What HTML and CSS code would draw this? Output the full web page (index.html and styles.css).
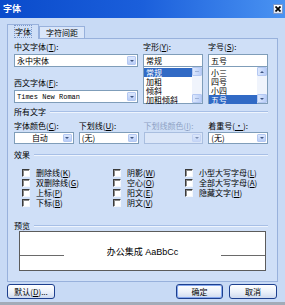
FILE: index.html
```html
<!DOCTYPE html>
<html lang="zh">
<head>
    <meta charset="UTF-8">
    <title>字体</title>
    <link rel="stylesheet" href="styles.css">
</head>
<body>
    <div class="window">
        <div class="titlebar">
            <span class="title">字体</span>
            <span class="close">
                <svg width="6" height="6" viewBox="0 0 6 6"><path d="M0.5 0.5L5.5 5.5M5.5 0.5L0.5 5.5" stroke="#000" stroke-width="1.7"/></svg>
            </span>
        </div>

        <div class="tabs">
            <div class="tab active"><span class="focus">字体</span></div>
            <div class="tab">字符间距</div>
        </div>

        <div class="panel">
            <div class="fonts">
                <div class="font-main">
                    <div class="label">中文字体(<u>T</u>):</div>
                    <div class="combo"><span class="value">永中宋体</span><span class="arrow"></span></div>
                    <div class="label second">西文字体(<u>F</u>):</div>
                    <div class="combo"><span class="value mono">Times New Roman</span><span class="arrow"></span></div>
                </div>
                <div class="font-list">
                    <div class="label">字形(<u>Y</u>):</div>
                    <div class="field">常规</div>
                    <div class="list">
                        <div class="items">
                            <div class="item selected">常规</div>
                            <div class="item">加粗</div>
                            <div class="item">倾斜</div>
                            <div class="item">加粗倾斜</div>
                        </div>
                        <div class="scroll faded">
                            <span class="sbtn up"></span>
                            <span class="track"></span>
                            <span class="sbtn down"></span>
                        </div>
                    </div>
                </div>
                <div class="font-list">
                    <div class="label">字号(<u>S</u>):</div>
                    <div class="field">五号</div>
                    <div class="list">
                        <div class="items">
                            <div class="item">小三</div>
                            <div class="item">四号</div>
                            <div class="item">小四</div>
                            <div class="item selected">五号</div>
                        </div>
                        <div class="scroll">
                            <span class="sbtn up"></span>
                            <span class="track"></span>
                            <span class="sbtn down"></span>
                        </div>
                    </div>
                </div>
            </div>

            <div class="group">所有文字</div>
            <div class="row4">
                <div>
                    <div class="label">字体颜色(<u>C</u>):</div>
                    <div class="combo small"><span class="value center">自动</span><span class="arrow"></span></div>
                </div>
                <div>
                    <div class="label">下划线(<u>U</u>):</div>
                    <div class="combo small"><span class="value">(无)</span><span class="arrow"></span></div>
                </div>
                <div>
                    <div class="label disabled">下划线颜色(<u>I</u>):</div>
                    <div class="combo small off"><span class="value"></span><span class="arrow"></span></div>
                </div>
                <div>
                    <div class="label">着重号(<u>·</u>):</div>
                    <div class="combo small"><span class="value">(无)</span><span class="arrow"></span></div>
                </div>
            </div>

            <div class="group effects-title">效果</div>
            <div class="effects">
                <div class="check"><span class="box"></span>删除线(<u>K</u>)</div>
                <div class="check"><span class="box"></span>双删除线(<u>G</u>)</div>
                <div class="check"><span class="box"></span>上标(<u>P</u>)</div>
                <div class="check"><span class="box"></span>下标(<u>B</u>)</div>
                <div class="check"><span class="box"></span>阴影(<u>W</u>)</div>
                <div class="check"><span class="box"></span>空心(<u>O</u>)</div>
                <div class="check"><span class="box"></span>阳文(<u>E</u>)</div>
                <div class="check"><span class="box"></span>阴文(<u>V</u>)</div>
                <div class="check"><span class="box"></span>小型大写字母(<u>L</u>)</div>
                <div class="check"><span class="box"></span>全部大写字母(<u>A</u>)</div>
                <div class="check"><span class="box"></span>隐藏文字(<u>H</u>)</div>
            </div>

            <div class="group preview-title">预览</div>
            <div class="preview">
                <span class="baseline left"></span>
                <span class="sample">办公集成 AaBbCc</span>
                <span class="baseline right"></span>
            </div>
        </div>

        <div class="buttons">
            <button class="btn wide">默认(<u>D</u>)...</button>
            <span class="spacer"></span>
            <button class="btn default">确定</button>
            <button class="btn">取消</button>
        </div>
    </div>
</body>
</html>
```

FILE: styles.css
```css
body {
    margin: 0;
    font-family: "Noto Sans CJK SC", sans-serif;
    font-size: 8px;
    color: #000;
}
u {
    text-decoration: underline;
}
.window {
    width: 285px;
    height: 305px;
    box-sizing: border-box;
    background-color: #c8daf5;
    border-bottom: 3px solid #a2abb8;
    overflow: hidden;
}
.titlebar {
    height: 18px;
    display: flex;
    align-items: center;
    justify-content: space-between;
    padding: 0 2px 0 3px;
    background: linear-gradient(to right, #0a4bcb, #1b5fdb 50%, #4a93f2);
}
.title {
    color: #fff;
    font-weight: bold;
    font-size: 9px;
    line-height: 18px;
}
.close {
    width: 10px;
    height: 10px;
    box-sizing: border-box;
    border: 1px solid #7d98c9;
    background: linear-gradient(#ffffff, #dde5f2);
    display: flex;
    align-items: center;
    justify-content: center;
}
.tabs {
    display: flex;
    align-items: flex-end;
    height: 14px;
    margin-top: 6px;
    padding-left: 7px;
}
.tab {
    height: 12px;
    box-sizing: border-box;
    line-height: 11px;
    padding: 0 6px;
    border: 1px solid #98b1dc;
    border-bottom: none;
    background-color: #dae6f9;
}
.tab.active {
    height: 15px;
    line-height: 13px;
    padding: 0 7px;
    margin-bottom: -1px;
    background-color: #cfdff7;
    position: relative;
    z-index: 1;
}
.focus {
    outline: 1px dotted #7d98c9;
}
.panel {
    margin: 0 7px;
    height: 244px;
    box-sizing: border-box;
    border: 1px solid #98b1dc;
    background-color: #cfdff7;
    padding: 2px 9px 0 6px;
}
.fonts {
    display: grid;
    grid-template-columns: 124px 60px 60px;
    column-gap: 5px;
}
.label {
    line-height: 12px;
    height: 12px;
    margin-bottom: 1px;
    white-space: nowrap;
}
.label.second {
    margin-top: 10px;
}
.label.disabled {
    color: #8ea2c4;
}
.combo {
    height: 13px;
    box-sizing: border-box;
    border: 1px solid #7f9db9;
    background-color: #fff;
    display: flex;
    align-items: center;
}
.combo.small {
    height: 12px;
}
.combo.off {
    background-color: #dbe6f8;
    border-color: #a9bedf;
}
.value {
    flex: 1;
    padding-left: 2px;
    line-height: 10px;
    white-space: nowrap;
}
.value.center {
    text-align: center;
}
.mono {
    font-family: "Liberation Mono", monospace;
    font-size: 7px;
}
.arrow {
    width: 9px;
    height: 9px;
    margin-right: 1px;
    box-sizing: border-box;
    border: 1px solid #b4c8f2;
    border-radius: 1px;
    background: linear-gradient(#dde8fd, #b9cdf7);
    display: flex;
    align-items: center;
    justify-content: center;
}
.combo.small .arrow {
    height: 8px;
}
.arrow::after {
    content: "";
    border-left: 2px solid transparent;
    border-right: 2px solid transparent;
    border-top: 2px solid #3f5581;
}
.combo.off .arrow {
    opacity: 0.6;
}
.field {
    height: 13px;
    box-sizing: border-box;
    border: 1px solid #7f9db9;
    background-color: #fff;
    padding-left: 2px;
    line-height: 11px;
}
.list {
    height: 37px;
    box-sizing: border-box;
    border: 1px solid #7f9db9;
    border-top: none;
    background-color: #fff;
    display: flex;
}
.items {
    flex: 1;
    padding-top: 1px;
}
.item {
    height: 9px;
    line-height: 9px;
    padding-left: 2px;
    white-space: nowrap;
}
.item.selected {
    background-color: #316ac5;
    color: #fff;
}
.scroll {
    width: 10px;
    display: flex;
    flex-direction: column;
    background-color: #f0f4fc;
}
.sbtn {
    height: 9px;
    box-sizing: border-box;
    border: 1px solid #b4c8f2;
    border-radius: 1px;
    background: linear-gradient(to right, #dde8fd, #b9cdf7);
    display: flex;
    align-items: center;
    justify-content: center;
}
.sbtn.up::after {
    content: "";
    border-left: 2px solid transparent;
    border-right: 2px solid transparent;
    border-bottom: 2px solid #3f5581;
}
.sbtn.down::after {
    content: "";
    border-left: 2px solid transparent;
    border-right: 2px solid transparent;
    border-top: 2px solid #3f5581;
}
.scroll.faded .sbtn::after {
    border-top-color: transparent;
    border-bottom-color: transparent;
    width: 4px;
    height: 1px;
    background-color: #9fb3d8;
    border: none;
}
.track {
    flex: 1;
}
.group {
    display: flex;
    align-items: center;
    line-height: 10px;
    margin-top: 3px;
}
.group::after {
    content: "";
    flex: 1;
    margin-left: 4px;
    border-top: 1px solid #a7bfe6;
    border-bottom: 1px solid #eef4fd;
}
.row4 {
    display: grid;
    grid-template-columns: repeat(4, 1fr);
    column-gap: 5px;
    margin-top: 4px;
}
.row4 .label {
    line-height: 10px;
    height: 10px;
    margin-bottom: 1px;
}
.effects-title {
    margin-top: 6px;
}
.effects {
    display: grid;
    grid-template-columns: 91px 72px 1fr;
    grid-template-rows: repeat(4, 10px);
    grid-auto-flow: column;
    margin-top: 8px;
    padding-left: 8px;
}
.check {
    display: flex;
    align-items: center;
    white-space: nowrap;
    line-height: 10px;
}
.box {
    width: 8px;
    height: 8px;
    box-sizing: border-box;
    margin-right: 6px;
    background-color: #fff;
    border: 1px solid;
    border-color: #3a3a3a #f4f7fc #f4f7fc #3a3a3a;
    box-shadow: inset 1px 1px 0 #8a8a8a;
}
.preview-title {
    margin-top: 13px;
}
.preview {
    height: 40px;
    margin: 0 2px 0 5px;
    box-sizing: border-box;
    border: 1px solid #5c5c5c;
    background-color: #fff;
    display: flex;
    align-items: center;
}
.baseline {
    width: 44px;
    margin-top: 9px;
    border-top: 1px solid #6a6a6a;
}
.sample {
    flex: 1;
    text-align: center;
    font-family: "Liberation Sans", "Noto Sans CJK SC", sans-serif;
    font-size: 9px;
}
.buttons {
    display: flex;
    margin-top: 2px;
    padding: 0 8px 0 7px;
    height: 15px;
}
.spacer {
    flex: 1;
}
.btn {
    width: 48px;
    height: 15px;
    box-sizing: border-box;
    padding: 0;
    margin-left: 6px;
    border: 1px solid #1d3f8e;
    border-radius: 3px;
    background: linear-gradient(#ffffff, #eaf0f9 55%, #cfdaef);
    font-family: inherit;
    font-size: 8px;
    line-height: 12px;
    color: #000;
}
.btn.wide {
    margin-left: 0;
}
.btn.default {
    width: 47px;
    box-shadow: inset 0 0 0 1px #86a8ee;
}
```
